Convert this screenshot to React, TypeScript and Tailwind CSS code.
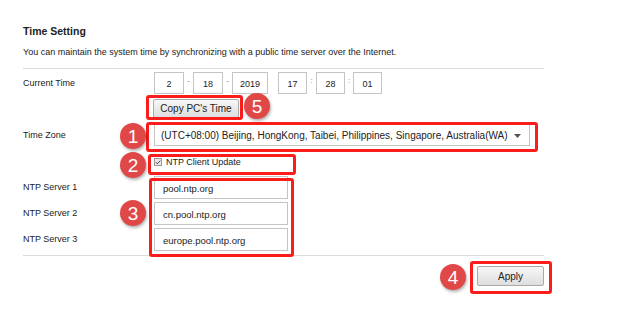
import { Check } from "lucide-react";

const TimeBox = ({ value, w }: { value: string; w: string }) => (
  <div
    className={`${w} h-[22px] border border-[#c4c4c4] flex items-center justify-center pt-[3px] text-[9px] text-[#222]`}
  >
    {value}
  </div>
);

const Sep = ({ ch, w }: { ch: string; w: string }) => (
  <div className={`${w} h-[22px] flex justify-center pt-[3px] text-[8px] text-[#777]`}>{ch}</div>
);

const Badge = ({ n, className }: { n: string; className: string }) => (
  <div
    className={`absolute w-[26px] h-[26px] rounded-full bg-[#e04848] text-white text-[19px] leading-none flex items-center justify-center shadow-[1px_2px_3px_rgba(0,0,0,0.3)] ${className}`}
  >
    {n}
  </div>
);

const Mark = ({ className }: { className: string }) => (
  <div className={`absolute border-[3px] border-[#fb1c1c] rounded-[3px] ${className}`} />
);

export default function App() {
  const servers = ["pool.ntp.org", "cn.pool.ntp.org", "europe.pool.ntp.org"];

  return (
    <div
      className="relative w-[625px] h-[331px] bg-white text-[#222] overflow-hidden"
      style={{ fontFamily: '"Liberation Sans", Arial, sans-serif' }}
    >
      <div className="w-[544px] pl-[23px] pt-[25px]">
        {/* Header */}
        <h2 className="text-[10.5px] leading-[13px] font-bold">Time Setting</h2>
        <p className="mt-[8px] text-[9px] leading-[12px]">
          You can maintain the system time by synchronizing with a public time server over the Internet.
        </p>
        <div className="mt-[10px] border-t border-[#dadada]" />

        {/* Current time */}
        <div className="mt-[3px] flex items-center">
          <div className="w-[131px] text-[9px] leading-[12px]">Current Time</div>
          <TimeBox value="2" w="w-[30px]" />
          <Sep ch="-" w="w-[9px]" />
          <TimeBox value="18" w="w-[30px]" />
          <Sep ch="-" w="w-[9px]" />
          <TimeBox value="2019" w="w-[36px]" />
          <div className="w-[10px]" />
          <TimeBox value="17" w="w-[29px]" />
          <Sep ch=":" w="w-[9px]" />
          <TimeBox value="28" w="w-[29px]" />
          <Sep ch=":" w="w-[8px]" />
          <TimeBox value="01" w="w-[29px]" />
        </div>
        <div className="mt-[5px] pl-[130px] flex">
          <button className="h-[19px] w-[86px] border border-[#a9a9a9] rounded-[2px] bg-gradient-to-b from-[#f7f7f7] to-[#dedede] text-[10px] leading-[12px] text-[#222] pt-[1px]">
            Copy PC's Time
          </button>
        </div>

        {/* Time zone */}
        <div className="mt-[6px] flex items-center">
          <div className="w-[131px] text-[9px] leading-[12px]">Time Zone</div>
          <div className="w-[376px] h-[22px] border border-[#c4c4c4] flex items-center justify-between pl-[6px] pr-[8px] text-[10px] leading-[12px] pt-[1px]">
            <span>(UTC+08:00) Beijing, HongKong, Taibei, Philippines, Singapore, Australia(WA)</span>
            <svg width="7" height="4" viewBox="0 0 7 4">
              <path d="M0 0h7L3.5 4z" fill="#555" />
            </svg>
          </div>
        </div>

        {/* NTP client */}
        <div className="mt-[10px] h-[12px] flex items-center pl-[131px]">
          <div className="w-[8px] h-[8px] border border-[#999] bg-[#e6e6e6] flex items-center justify-center">
            <Check size={7} strokeWidth={4} className="text-[#444]" />
          </div>
          <span className="ml-[4px] text-[9px] leading-[12px]">NTP Client Update</span>
        </div>

        {/* NTP servers */}
        <div className="mt-[8px] flex flex-col gap-[3px]">
          {servers.map((s, i) => (
            <div key={s} className="flex items-center h-[23px]">
              <div className="w-[131px] text-[9px] leading-[12px] -mt-[2px]">NTP Server {i + 1}</div>
              <div className="w-[134px] h-[23px] border border-[#c4c4c4] flex items-center pl-[8px] pt-[2px] text-[9.5px] leading-[12px]">
                {s}
              </div>
            </div>
          ))}
        </div>
        <div className="mt-[4px] border-t border-[#dadada]" />

        <div className="mt-[10px] flex justify-end">
          <button className="h-[20px] w-[67px] border border-[#a9a9a9] rounded-[2px] bg-gradient-to-b from-[#f7f7f7] to-[#dedede] text-[10px] leading-[12px] text-[#222] pt-[1px]">
            Apply
          </button>
        </div>
      </div>

      {/* Annotations */}
      <Mark className="left-[146px] top-[95px] w-[97px] h-[25px]" />
      <Mark className="left-[146px] top-[122px] w-[392px] h-[30px]" />
      <Mark className="left-[148px] top-[154px] w-[148px] h-[21px]" />
      <Mark className="left-[149px] top-[178px] w-[145px] h-[79px]" />
      <Mark className="left-[470px] top-[261px] w-[82px] h-[33px]" />

      <Badge n="5" className="left-[244px] top-[93px]" />
      <Badge n="1" className="left-[120px] top-[123px]" />
      <Badge n="2" className="left-[120px] top-[152px]" />
      <Badge n="3" className="left-[120px] top-[200px]" />
      <Badge n="4" className="left-[440px] top-[264px]" />
    </div>
  );
}
